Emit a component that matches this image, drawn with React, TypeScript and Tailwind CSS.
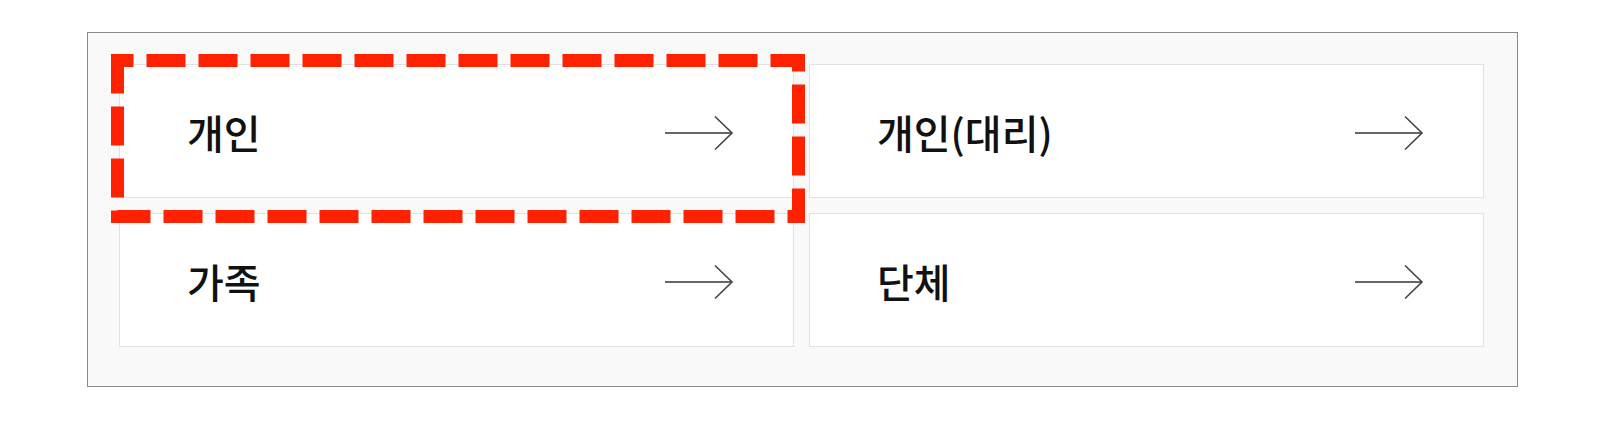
import React from 'react';

const items = ['개인', '개인(대리)', '가족', '단체'];

function Arrow() {
  return (
    <svg width="70" height="36" viewBox="0 0 70 36" fill="none" className="shrink-0 mt-[3px]">
      <path d="M1 18H68" stroke="#333" strokeWidth="1.6" />
      <path d="M51 1.5L68 18L51 34.5" stroke="#444" strokeWidth="1.6" />
    </svg>
  );
}

export default function App() {
  return (
    <div className="relative h-[430px] w-[1600px] bg-white pt-[32px] pl-[87px]" style={{ fontFamily: '"Noto Sans CJK KR", "Noto Sans", sans-serif' }}>
      <div className="w-[1431px] h-[355px] border border-[#8a8a8a] bg-[#f9f9f9] pt-[31px] pl-[31px] pr-[33px]">
        <div className="grid grid-cols-2 gap-[15px]">
          {items.map((label) => (
            <button
              key={label}
              className="h-[134px] flex items-center justify-between border border-[#e2e2e2] bg-white pl-[67px] pr-[59px] text-left"
            >
              <span className="text-[40px] font-medium text-[#111] leading-none mt-[2px]">{label}</span>
              <Arrow />
            </button>
          ))}
        </div>
      </div>

      {/* highlight annotation */}
      <svg className="absolute left-[111px] top-[54px] pointer-events-none" width="694" height="169">
        <rect
          x="6.5"
          y="6.5"
          width="681"
          height="156"
          fill="none"
          stroke="#ff2200"
          strokeWidth="13"
          strokeDasharray="39 13"
          strokeDashoffset="23"
        />
      </svg>
    </div>
  );
}
